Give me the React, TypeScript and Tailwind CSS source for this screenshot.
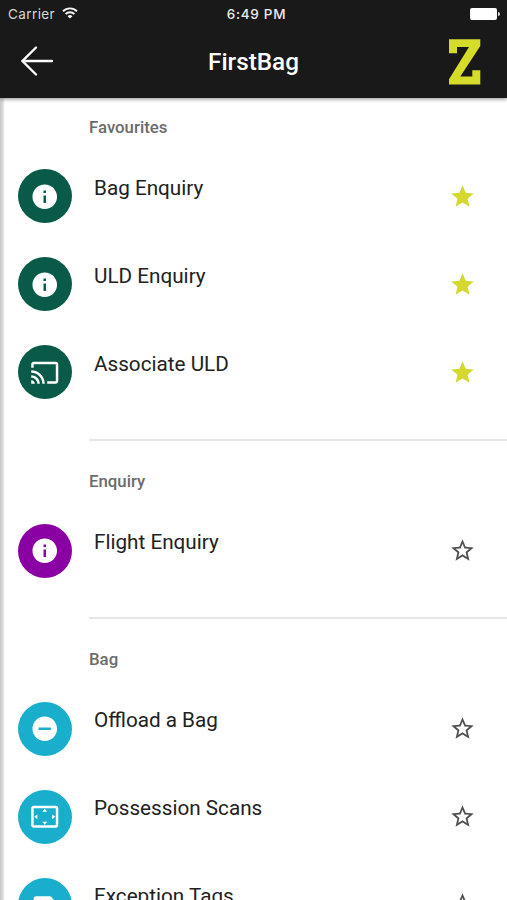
import type { IconType } from 'react-icons';
import { MdCast, MdInfo, MdLabel, MdRemoveCircle, MdSettingsOverscan, MdStar, MdStarBorder } from 'react-icons/md';

type Item = {
  label: string;
  icon: IconType;
  color: string;
  favourite?: boolean;
};

const sections: { title: string; items: Item[] }[] = [
  {
    title: 'Favourites',
    items: [
      { label: 'Bag Enquiry', icon: MdInfo, color: 'bg-[#0a5a4a]', favourite: true },
      { label: 'ULD Enquiry', icon: MdInfo, color: 'bg-[#0a5a4a]', favourite: true },
      { label: 'Associate ULD', icon: MdCast, color: 'bg-[#0a5a4a]', favourite: true },
    ],
  },
  {
    title: 'Enquiry',
    items: [{ label: 'Flight Enquiry', icon: MdInfo, color: 'bg-[#8a00a2]' }],
  },
  {
    title: 'Bag',
    items: [
      { label: 'Offload a Bag', icon: MdRemoveCircle, color: 'bg-[#19afcc]' },
      { label: 'Possession Scans', icon: MdSettingsOverscan, color: 'bg-[#19afcc]' },
      { label: 'Exception Tags', icon: MdLabel, color: 'bg-[#19afcc]' },
    ],
  },
];

function StatusBar() {
  return (
    <div className="grid h-7 grid-cols-3 items-center pl-2 pr-[7px] font-[Inter,sans-serif] text-[13.5px] leading-7">
      <div className="flex items-center gap-[7px] text-[#d6d6d6]">
        <span className="tracking-[0.4px]">Carrier</span>
        <svg className="-mt-[2px]" width="16" height="12" viewBox="0 0 16 12" fill="none" stroke="#f4f4f4" strokeWidth="1.9">
          <path d="M1 4.2a10 10 0 0 1 14 0" />
          <path d="M3.6 7a6.3 6.3 0 0 1 8.8 0" />
          <path d="M8 11.6 5.6 9.2a3.4 3.4 0 0 1 4.8 0Z" fill="#f4f4f4" stroke="none" />
        </svg>
      </div>
      <span className="pl-[5px] text-center font-medium tracking-[0.7px] text-[#ececec]">6:49 PM</span>
      <div className="flex items-center justify-end gap-px">
        <div className="h-3 w-[27px] rounded-[2px] bg-white" />
        <div className="h-1 w-[2px] rounded-r-full bg-[#dddddd]" />
      </div>
    </div>
  );
}

function Header() {
  return (
    <header className="relative z-10 h-[98px] bg-[#191919] text-white shadow-[0_1px_4px_rgba(0,0,0,0.45)]">
      <StatusBar />
      <div className="grid h-[68px] grid-cols-3 items-center pl-[21px] pr-[26px]">
        <svg className="-mt-[2px]" width="32" height="30" viewBox="0 0 32 30" fill="none" stroke="currentColor" strokeWidth="2.3" strokeLinecap="round">
          <path d="M31 15H1.5M15 1.5 1.5 15 15 28.5" />
        </svg>
        <h1 className="pl-[5px] text-center text-[24.3px] font-medium">FirstBag</h1>
        <svg className="justify-self-end" width="32" height="46" viewBox="0 0 32 46" fill="#d5dc2a">
          <path d="M0 .3H31.3V7L11.3 37.6H23.3V31.3H31.3V45.6H0V40.2L20 8H8V14.3H0Z" />
        </svg>
      </div>
    </header>
  );
}

function Row({ item }: { item: Item }) {
  const Icon = item.icon;

  return (
    <li className="flex h-22 items-center pl-[18px] pr-[31px]">
      <div className={`flex size-[54px] shrink-0 items-center justify-center rounded-full text-white ${item.color}`}>
        <Icon className="size-[29.5px]" />
      </div>
      <span className="ml-[22px] flex-1 pb-[17.2px] text-[20.7px] leading-7 text-[#212121]">{item.label}</span>
      {item.favourite ? (
        <MdStar className="size-[27px] text-[#d5d92f]" />
      ) : (
        <MdStarBorder className="size-[27px] text-[#505050]" />
      )}
    </li>
  );
}

export default function App() {
  return (
    <div className="flex h-[900px] w-[507px] flex-col overflow-hidden bg-white font-[Roboto,sans-serif]">
      <Header />
      <main className="relative min-h-0 flex-1 overflow-hidden pt-[0.4px]">
        {sections.map((section, i) => (
          <section key={section.title}>
            {i > 0 && <div className="mb-3 ml-[89px] mt-[22.2px] h-[2px] bg-[#e6e6e6]" />}
            <h2 className="h-[54px] pl-[89px] pt-[16.6px] text-[16.8px] font-medium leading-6 text-[#6b6b6b]">{section.title}</h2>
            <ul>
              {section.items.map((item) => (
                <Row key={item.label} item={item} />
              ))}
            </ul>
          </section>
        ))}
        {/* shadow of the page underneath */}
        <div className="absolute inset-y-0 left-0 w-[5px] bg-linear-to-r from-[#c8c8c8] via-[#d8d8d8] to-white" />
      </main>
    </div>
  );
}
